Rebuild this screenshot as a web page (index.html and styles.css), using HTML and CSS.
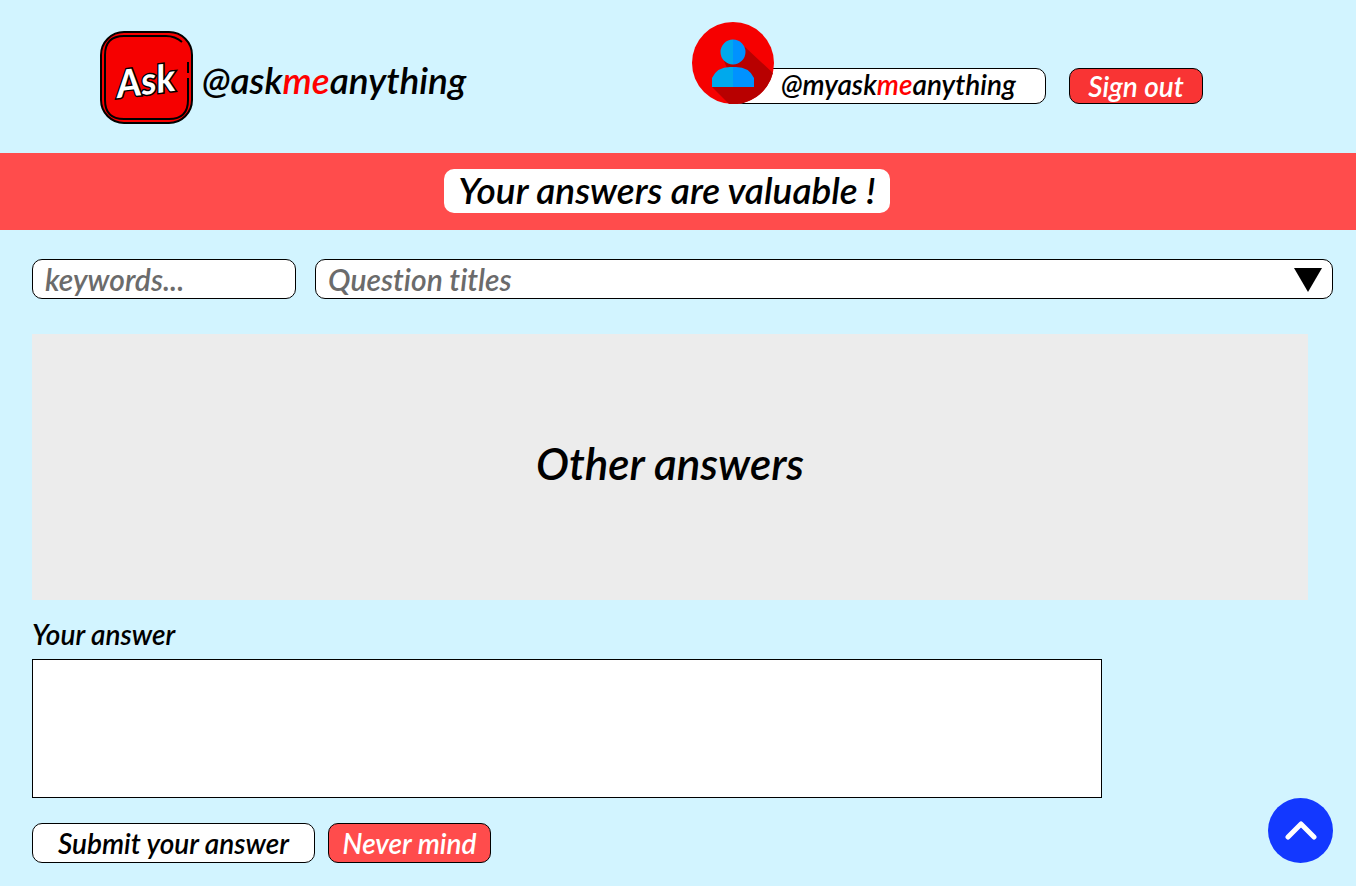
FILE: index.html
```html
<!DOCTYPE html>
<html lang="en">
<head>
<meta charset="utf-8">
<meta name="viewport" content="width=device-width, initial-scale=1">
<title>Ask me anything</title>
<link rel="stylesheet" href="styles.css">
</head>
<body>
<header class="header">
  <div class="brand">
    <svg class="logo" viewBox="0 0 93 93" role="img" aria-label="Ask">
      <rect class="logo-box" x="1" y="1" width="91" height="91" rx="23"/>
      <path class="logo-line" d="M82 11Q75 5 66 5H24Q5 5 5 24V69Q5 88 24 88H69Q88 88 88 69V47M88 42V31"/>
      <text class="logo-text" x="18" y="67" transform="rotate(-7 18 67)">Ask</text>
    </svg>
    <span class="brand-name">@ask<span class="me">me</span>anything</span>
  </div>
  <div class="account">
    <div class="user">
      <svg class="avatar" viewBox="0 0 82 82" aria-hidden="true">
        <circle cx="41" cy="41" r="41" fill="#f60000"/>
        <path d="M53 25L81 51A41 41 0 0 1 37 82L20 65L35 46L32 39Z" fill="#b80000"/>
        <path d="M41 17.500A12.500 12.500 0 0 0 41 42.500ZM41 45H38Q25 45 20 56V65H41Z" fill="#00a9ec"/>
        <path d="M41 17.500A12.500 12.500 0 0 1 41 42.500ZM41 45H44Q57 45 62 56V65H41Z" fill="#0092ff"/>
      </svg>
      <span class="user-name">@myask<span class="me">me</span>anything</span>
    </div>
    <button class="sign-out" type="button">Sign out</button>
  </div>
</header>
<div class="banner"><h1 class="banner-title">Your answers are valuable !</h1></div>
<main class="content">
  <div class="filters">
    <input class="field keywords" type="text" placeholder="keywords..." aria-label="Keywords">
    <div class="titles">
      <select class="field titles-select" aria-label="Question titles"><option>Question titles</option></select>
      <svg class="arrow" viewBox="0 0 28 24" aria-hidden="true"><path d="M0 0H28L14 24Z"/></svg>
    </div>
  </div>
  <section class="answers"><h2 class="answers-title">Other answers</h2></section>
  <form class="answer-form">
    <label class="answer-label" for="answer">Your answer</label>
    <textarea class="answer-text" id="answer"></textarea>
    <div class="actions">
      <button class="action submit" type="button">Submit your answer</button>
      <button class="action cancel" type="button">Never mind</button>
    </div>
  </form>
</main>
<button class="to-top" type="button" aria-label="Back to top">
  <svg class="chevron" viewBox="0 0 32 20" aria-hidden="true"><path d="M3 16L16 3L29 16"/></svg>
</button>
</body>
</html>
```
FILE: styles.css
```css
* { box-sizing: border-box; }

body {
  margin: 0;
  background: #d2f4ff;
  color: #000;
  font-family: Lato, "Open Sans", sans-serif;
  font-style: italic;
  font-weight: 600;
  font-variant-ligatures: none;
}

button, input, select, textarea { font: inherit; font-variant-ligatures: none; }
button { padding: 0; cursor: pointer; }
h1, h2 { margin: 0; font-weight: inherit; }
.me { color: #f00; }

.header {
  display: flex;
  justify-content: space-between;
  align-items: flex-start;
  padding: 22px 153px 29px 100px;
}
.brand { display: flex; align-items: center; gap: 9px; margin-top: 9px; }
.logo { width: 93px; height: 93px; }
.logo-box { fill: #f60000; stroke: #000; stroke-width: 2; }
.logo-line { fill: none; stroke: #000; stroke-width: 2; }
.logo-text {
  font: italic 700 38px Lato, sans-serif;
  fill: #fff;
  stroke: #000;
  stroke-width: 3;
  paint-order: stroke;
}
.brand-name { font-size: 37px; line-height: 44px; padding-top: 4px; }

.account { display: flex; align-items: flex-end; gap: 23px; }
.user { display: flex; align-items: flex-end; }
.avatar { width: 82px; height: 82px; z-index: 1; }
.user-name {
  width: 313px;
  height: 36px;
  margin-left: -41px;
  padding-left: 47px;
  border: 1px solid #000;
  border-radius: 10px;
  background: #fff;
  font-size: 28px;
  line-height: 30px;
}
.sign-out {
  width: 134px;
  height: 36px;
  border: 1px solid #000;
  border-radius: 10px;
  background: #f93434;
  color: #fff;
  font-size: 28px;
  line-height: 32px;
}

.banner {
  display: flex;
  justify-content: center;
  padding: 16px 22px 17px 0;
  background: #ff4c4c;
}
.banner-title {
  width: 446px;
  border-radius: 10px;
  background: #fff;
  font-size: 37px;
  line-height: 42px;
  padding-bottom: 2px;
  text-align: center;
}

.content { padding: 29px 23px 23px 32px; }
.filters { display: flex; gap: 19px; }
.field {
  height: 40px;
  border: 1px solid #000;
  border-radius: 10px;
  background: #fff;
  color: #6b6b6b;
  font-size: 30px;
  padding: 0 12px;
}
.field::placeholder { color: #6b6b6b; opacity: 1; }
.keywords { width: 264px; }
.titles { position: relative; flex: 1; }
.titles-select { display: block; width: 100%; appearance: none; }
.arrow {
  position: absolute;
  top: 9px;
  right: 11px;
  width: 28px;
  height: 24px;
  pointer-events: none;
}

.answers {
  display: flex;
  align-items: center;
  justify-content: center;
  min-height: 266px;
  margin: 35px 25px 0 0;
  background: #ececec;
}
.answers-title { font-size: 44px; line-height: 52px; padding-bottom: 8px; }

.answer-form { padding-top: 16px; }
.answer-label { display: block; font-size: 28px; line-height: 36px; }
.answer-text {
  display: block;
  width: calc(100% - 231px);
  height: 139px;
  margin-top: 7px;
  padding: 8px 12px;
  border: 1px solid #000;
  background: #fff;
  font-size: 28px;
  resize: none;
}
.actions { display: flex; gap: 13px; margin-top: 25px; }
.action {
  height: 40px;
  border: 1px solid #000;
  border-radius: 10px;
  font-size: 28px;
}
.submit { width: 283px; background: #fff; color: #000; }
.cancel { width: 163px; background: #ff4c4c; color: #fff; }

.to-top {
  position: fixed;
  right: 23px;
  bottom: 23px;
  display: grid;
  place-items: center;
  width: 65px;
  height: 65px;
  border: 0;
  border-radius: 50%;
  background: #1338ff;
}
.chevron { width: 32px; height: 20px; fill: none; stroke: #fff; stroke-width: 5; stroke-linecap: round; stroke-linejoin: round; }
```
